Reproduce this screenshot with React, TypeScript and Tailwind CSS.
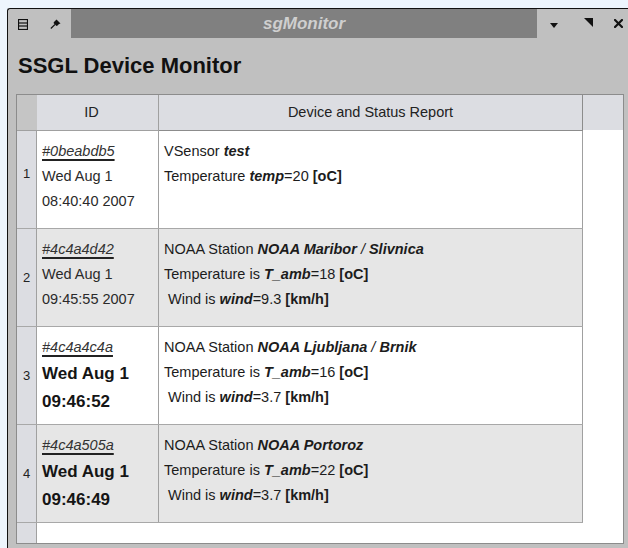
import React from "react";

type Row = {
  n: number;
  id: string;
  date: string;
  time: string;
  big: boolean;
  shaded: boolean;
  lines: React.ReactNode[];
};

const BI = ({ children }: { children: React.ReactNode }) => (
  <b className="font-bold italic">{children}</b>
);

const rows: Row[] = [
  {
    n: 1,
    id: "#0beabdb5",
    date: "Wed Aug 1",
    time: "08:40:40 2007",
    big: false,
    shaded: false,
    lines: [
      <>VSensor <BI>test</BI></>,
      <>Temperature <BI>temp</BI>=20 <b>[oC]</b></>,
    ],
  },
  {
    n: 2,
    id: "#4c4a4d42",
    date: "Wed Aug 1",
    time: "09:45:55 2007",
    big: false,
    shaded: true,
    lines: [
      <>NOAA Station <BI>NOAA Maribor</BI> <i>/</i> <BI>Slivnica</BI></>,
      <>Temperature is <BI>T_amb</BI>=18 <b>[oC]</b></>,
      <>{"\u00a0"}Wind is <BI>wind</BI>=9.3 <b>[km/h]</b></>,
    ],
  },
  {
    n: 3,
    id: "#4c4a4c4a",
    date: "Wed Aug 1",
    time: "09:46:52",
    big: true,
    shaded: false,
    lines: [
      <>NOAA Station <BI>NOAA Ljubljana</BI> <i>/</i> <BI>Brnik</BI></>,
      <>Temperature is <BI>T_amb</BI>=16 <b>[oC]</b></>,
      <>{"\u00a0"}Wind is <BI>wind</BI>=3.7 <b>[km/h]</b></>,
    ],
  },
  {
    n: 4,
    id: "#4c4a505a",
    date: "Wed Aug 1",
    time: "09:46:49",
    big: true,
    shaded: true,
    lines: [
      <>NOAA Station <BI>NOAA Portoroz</BI></>,
      <>Temperature is <BI>T_amb</BI>=22 <b>[oC]</b></>,
      <>{"\u00a0"}Wind is <BI>wind</BI>=3.7 <b>[km/h]</b></>,
    ],
  },
];

function MenuIcon() {
  return (
    <svg width="10" height="11" viewBox="0 0 10 11">
      <rect x="0.5" y="0.5" width="9" height="10" fill="none" stroke="#111" strokeWidth="1.2" />
      <line x1="0.5" y1="4" x2="9.5" y2="4" stroke="#111" strokeWidth="1.2" />
      <line x1="0.5" y1="7" x2="9.5" y2="7" stroke="#111" strokeWidth="1.2" />
    </svg>
  );
}

function PinIcon() {
  return (
    <svg width="11" height="10" viewBox="0 0 11 10">
      <polygon points="6.5,0.5 10.5,4.5 9,5 7.5,6.5 6.5,7 3.5,4 4,3 5.5,1.5" fill="#111" />
      <line x1="5" y1="5.5" x2="0.8" y2="9.5" stroke="#111" strokeWidth="1.1" />
    </svg>
  );
}

function DropIcon() {
  return (
    <svg width="8" height="5" viewBox="0 0 8 5">
      <polygon points="0,0 8,0 4,5" fill="#111" />
    </svg>
  );
}

function CornerIcon() {
  return (
    <svg width="9" height="9" viewBox="0 0 9 9">
      <polygon points="0,0 9,0 9,9" fill="#111" />
    </svg>
  );
}

function CloseIcon() {
  return (
    <svg width="9" height="9" viewBox="0 0 9 9">
      <path d="M1 1 L8 8 M8 1 L1 8" stroke="#111" strokeWidth="2.2" strokeLinecap="square" />
    </svg>
  );
}

export default function App() {
  return (
    <div className="w-[628px] h-[548px] overflow-hidden bg-[#edf5fd] pl-[7px] pt-[8px] font-['Liberation_Sans',Arial,Helvetica,sans-serif] text-[#151515]">
      <div className="w-[640px] h-[560px] bg-[#c0c0c0] border-l border-t border-[#111] rounded-tl-[3px]">
        {/* title bar */}
        <div className="flex h-[29px] items-stretch">
          <div className="w-[63px] flex items-center">
            <div className="ml-[10px] mt-[1px]"><MenuIcon /></div>
            <div className="ml-[22px] mt-[1px]"><PinIcon /></div>
          </div>
          <div className="w-[466px] bg-[#808080] flex items-center justify-center">
            <span className="text-[17px] font-bold italic text-[#cfcfcf] leading-none">sgMonitor</span>
          </div>
          <div className="flex items-center">
            <div className="ml-[13px] mt-[3px]"><DropIcon /></div>
            <div className="ml-[26px] -mt-[2px]"><CornerIcon /></div>
            <div className="ml-[21px]"><CloseIcon /></div>
          </div>
        </div>

        {/* heading */}
        <div className="h-[56px] flex items-center pl-[10px]">
          <h1 className="text-[22px] font-bold leading-none text-[#111]">SSGL Device Monitor</h1>
        </div>

        {/* table */}
        <div className="ml-[8px] w-[608px] h-[450px] border border-[#8c8c8c] bg-white flex">
          <div className="w-[566px] flex flex-col">
            {/* header */}
            <div className="flex h-[36px] text-[14.5px] text-[#222]">
              <div className="w-[20px] bg-[#c5c5c5] border-b border-[#a0a0a0]" />
              <div className="w-[122px] bg-[#dcdde2] border-r border-b border-[#a0a0a0] flex items-center justify-center pr-[12px]">
                ID
              </div>
              <div className="w-[424px] bg-[#dcdde2] border-r border-b border-[#8c8c8c] flex items-center justify-center">
                Device and Status Report
              </div>
            </div>

            {rows.map((r) => (
              <div
                key={r.n}
                className={`flex h-[98px] border-b border-[#a8a8a8] ${r.shaded ? "bg-[#e6e6e6]" : "bg-white"}`}
              >
                <div
                  className={`w-[20px] bg-[#dcdde2] border-r border-[#a0a0a0] flex items-center justify-center text-[13px] text-[#222] ${r.n === 1 ? "pb-[12px]" : ""}`}
                >
                  {r.n}
                </div>
                <div className="w-[122px] border-r border-[#a0a0a0] pl-[5px] pt-[8px] text-[14.5px]">
                  <div className="leading-[25px] italic text-[#333] underline decoration-[#222] decoration-[1.5px] underline-offset-[3px]">
                    {r.id}
                  </div>
                  {r.big ? (
                    <>
                      <div className="leading-[28px] text-[17px] font-bold">{r.date}</div>
                      <div className="leading-[28px] text-[17px] font-bold">{r.time}</div>
                    </>
                  ) : (
                    <>
                      <div className="leading-[25px] text-[#2a2a2a]">{r.date}</div>
                      <div className="leading-[25px] text-[#2a2a2a]">{r.time}</div>
                    </>
                  )}
                </div>
                <div className="w-[424px] border-r border-[#a0a0a0] pl-[5px] pt-[8px] text-[14.5px] text-[#1c1c1c]">
                  {r.lines.map((l, i) => (
                    <div key={i} className="leading-[25px] whitespace-pre">
                      {l}
                    </div>
                  ))}
                </div>
              </div>
            ))}

            <div className="flex flex-1">
              <div className="w-[20px] bg-[#dcdde2] border-r border-[#a0a0a0]" />
              <div className="flex-1" />
            </div>
          </div>

          {/* filler column */}
          <div className="flex-1 flex flex-col">
            <div className="h-[35px] bg-[#dcdde2]" />
            <div className="flex-1 bg-white" />
          </div>
        </div>
      </div>
    </div>
  );
}
